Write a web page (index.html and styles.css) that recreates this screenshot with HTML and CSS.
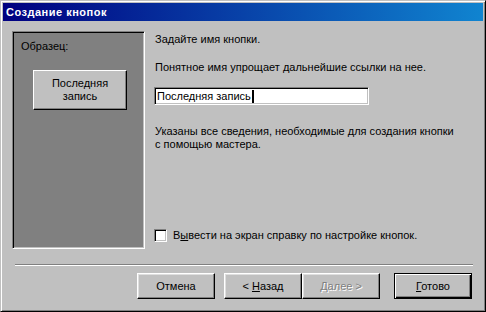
FILE: index.html
```html
<!DOCTYPE html>
<html lang="ru">
<head>
<meta charset="utf-8">
<title>Создание кнопок</title>
<link rel="stylesheet" href="styles.css">
</head>
<body>
<div class="window">
  <div class="titlebar"><span class="title">Создание кнопок</span></div>
  <div class="body">
    <div class="main">
      <div class="sample">
        <div class="sample-label">Образец:</div>
        <div class="sample-btn">Последняя<br>запись</div>
      </div>
      <div class="content">
        <p class="t1">Задайте имя кнопки.</p>
        <p class="t2">Понятное имя упрощает дальнейшие ссылки на нее.</p>
        <div class="input"><span class="input-text">Последняя запись</span><span class="caret"></span></div>
        <p class="t3">Указаны все сведения, необходимые для создания кнопки<br>с помощью мастера.</p>
        <label class="check"><span class="box"></span><span class="check-text">В<u>ы</u>вести на экран справку по настройке кнопок.</span></label>
      </div>
    </div>
    <div class="sep"></div>
    <div class="buttons">
      <div class="btn btn-cancel"><span>Отмена</span></div>
      <div class="btn btn-back"><span>&lt; <u>Н</u>азад</span></div>
      <div class="btn btn-next disabled"><span><u>Д</u>алее &gt;</span></div>
      <div class="btn btn-finish default"><span><u>Г</u>отово</span></div>
    </div>
  </div>
</div>
</body>
</html>
```

FILE: styles.css
```css
html, body {
  margin: 0;
  padding: 0;
  background: #c0c0c0;
}

body {
  font-family: "Liberation Sans", Arial, sans-serif;
  font-size: 11px;
  line-height: 13px;
  color: #000;
}

p {
  margin: 0;
}

.window {
  width: 486px;
  height: 312px;
  box-sizing: border-box;
  background: #c0c0c0;
  border: 1px solid;
  border-color: #c0c0c0 #000 #000 #c0c0c0;
  box-shadow: inset 1px 1px #fff, inset -1px -1px #808080;
  padding: 2px;
  display: flex;
  flex-direction: column;
}

.titlebar {
  height: 18px;
  flex: none;
  background: linear-gradient(to right, #000080, #1084d0);
  color: #fff;
  font-weight: bold;
  font-size: 11px;
  line-height: 13px;
  letter-spacing: 0.5px;
  display: flex;
  align-items: center;
  padding-left: 3px;
  padding-top: 1px;
  box-sizing: border-box;
}

.body {
  flex: 1;
  padding: 10px 10px 10px 9px;
  display: flex;
  flex-direction: column;
}

.main {
  display: flex;
  height: 218px;
  flex: none;
}

.sample {
  width: 133px;
  height: 218px;
  box-sizing: border-box;
  background: #808080;
  border: 1px solid;
  border-color: #808080 #fff #fff #808080;
  box-shadow: inset 1px 1px #000, inset -1px -1px #c0c0c0;
  padding: 8px 0 0 8px;
}

.sample-btn {
  margin: 17px 0 0 12px;
  width: 94px;
  height: 40px;
  box-sizing: border-box;
  background: #c0c0c0;
  border: 1px solid;
  border-color: #fff #000 #000 #fff;
  box-shadow: inset -1px -1px #808080;
  display: flex;
  align-items: center;
  justify-content: center;
  text-align: center;
}

.content {
  margin-left: 10px;
  flex: 1;
  display: flex;
  flex-direction: column;
  padding-top: 2px;
}

.t2 {
  margin-top: 15px;
}

.input {
  margin-top: 13px;
  margin-left: -1px;
  width: 215px;
  height: 18px;
  box-sizing: border-box;
  background: #fff;
  border: 1px solid;
  border-color: #808080 #fff #fff #808080;
  box-shadow: inset 1px 1px #000, inset -1px -1px #c0c0c0;
  padding: 2px 0 0 2px;
  display: flex;
  align-items: flex-start;
}

.caret {
  width: 2px;
  height: 13px;
  background: #000;
  margin-left: 1px;
}

.t3 {
  margin-top: 20px;
}

.check {
  margin-top: auto;
  margin-bottom: 7px;
  margin-left: -1px;
  display: flex;
  align-items: center;
  height: 13px;
}

.box {
  width: 13px;
  height: 13px;
  box-sizing: border-box;
  background: #fff;
  border: 1px solid;
  border-color: #808080 #fff #fff #808080;
  box-shadow: inset 1px 1px #000, inset -1px -1px #c0c0c0;
  margin-right: 6px;
  flex: none;
}

.sep {
  margin-top: 15px;
  margin-left: 3px;
  flex: none;
  border-top: 1px solid #808080;
  border-bottom: 1px solid #fff;
}

.buttons {
  margin-top: 7px;
  display: flex;
  justify-content: flex-end;
  padding-right: 1px;
}

.btn {
  width: 78px;
  height: 26px;
  box-sizing: border-box;
  background: #c0c0c0;
  border: 1px solid;
  border-color: #fff #000 #000 #fff;
  box-shadow: inset -1px -1px #808080, inset 1px 1px #dfdfdf;
  display: flex;
  align-items: center;
  justify-content: center;
}

.btn-back {
  margin-left: 9px;
}

.btn-finish {
  margin-left: 14px;
}

.btn.default {
  border: 1px solid #000;
  box-shadow: inset 1px 1px #fff, inset -1px -1px #000, inset -2px -2px #808080;
}

.btn.disabled {
  color: #808080;
  text-shadow: 1px 1px #fff;
}
```
